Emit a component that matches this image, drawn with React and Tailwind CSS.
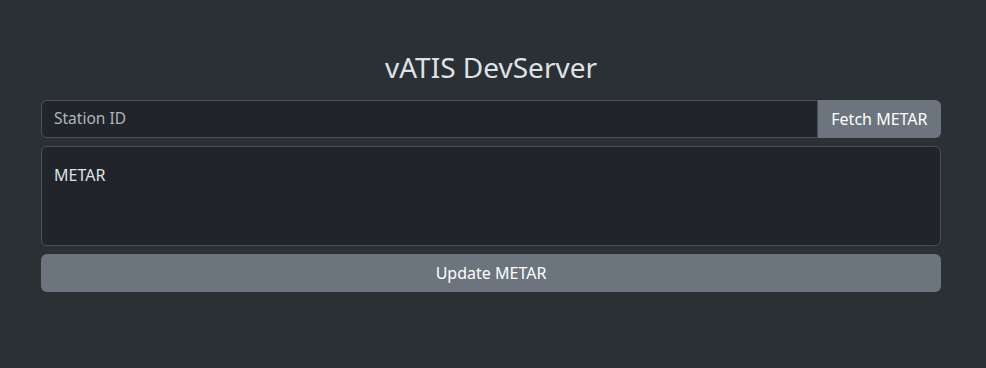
export default function App() {
  return (
    <div className="min-h-screen bg-[#2b3035] text-[#dee2e6]" style={{ fontFamily: '"Noto Sans", Lato, sans-serif' }}>
      <div className="ml-[41px] w-[900px] pt-[48px]">
        <h2 className="text-center text-[28px] leading-[38px] font-normal mb-[14px]">vATIS DevServer</h2>
        <div className="flex h-[38px]">
          <input
            placeholder="Station ID"
            className="flex-1 bg-[#212529] border border-[#495057] rounded-l-[6px] px-3 text-[15.5px] text-[#dee2e6] placeholder:text-[#adb5bd] outline-none"
          />
          <button className="bg-[#6c757d] text-white px-[13.5px] rounded-r-[6px] text-base">Fetch METAR</button>
        </div>
        <textarea
          placeholder="METAR"
          className="block w-full h-[100px] mt-2 bg-[#212529] border border-[#495057] rounded-[6px] px-3 pt-4 text-base text-[#dee2e6] placeholder:text-[#dee2e6] outline-none resize-none"
        />
        <button className="block w-full h-[38px] mt-2 bg-[#6c757d] text-white rounded-[6px] text-base">Update METAR</button>
      </div>
    </div>
  )
}
